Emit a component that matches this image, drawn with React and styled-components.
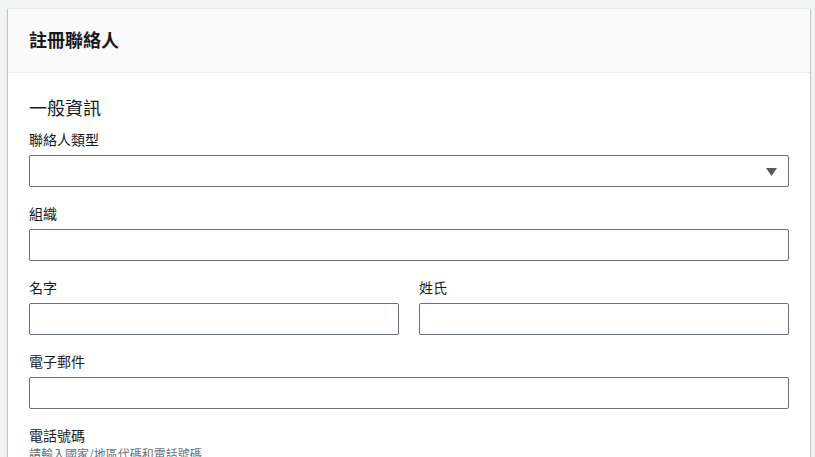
import React from "react";
import styled, { createGlobalStyle } from "styled-components";

const Global = createGlobalStyle`
  html, body { margin: 0; padding: 0; background: #f2f3f3; }
  body {
    padding: 8px;
    font-family: Roboto, "Noto Sans CJK TC", "Noto Sans", sans-serif;
    color: #16191f;
    overflow: hidden;
  }
`;

const Card = styled.div`
  width: 802px;
  box-sizing: border-box;
  background: #fff;
  border-top: 1px solid #eaeded;
  box-shadow: 0 1px 1px 0 rgba(0, 28, 36, 0.3), 1px 1px 1px 0 rgba(0, 28, 36, 0.15),
    -1px 1px 1px 0 rgba(0, 28, 36, 0.15);
`;

const Header = styled.div`
  height: 64px;
  box-sizing: border-box;
  background: #fafafa;
  border-bottom: 1px solid #eaeded;
  display: flex;
  align-items: center;
  padding: 0 21px 3px;
`;

const Title = styled.h2`
  margin: 0;
  font-size: 18px;
  font-weight: 700;
  line-height: 22px;
  font-family: "Noto Sans CJK TC", sans-serif;
  color: #16191f;
`;

const Body = styled.div`
  padding: 22px 21px 0 21px;
  display: flex;
  flex-direction: column;
  gap: 17px;
`;

const SectionTitle = styled.h3`
  margin: 0 0 -6px;
  font-size: 18px;
  font-weight: 400;
  line-height: 24px;
  font-family: "Noto Sans CJK TC", sans-serif;
`;

const Row = styled.div`
  display: grid;
  grid-template-columns: 1fr 1fr;
  gap: 20px;
`;

const Field = styled.div`
  display: flex;
  flex-direction: column;
`;

const Label = styled.label`
  font-size: 14px;
  line-height: 18px;
  margin-bottom: 7px;
  font-family: "Noto Sans CJK TC", sans-serif;
  color: #16191f;
`;

const Hint = styled.div`
  font-size: 12px;
  line-height: 16px;
  margin-top: -5px;
  margin-bottom: 4px;
  color: #687078;
  font-family: "Noto Sans CJK TC", sans-serif;
`;

const Input = styled.div`
  position: relative;
  height: 32px;
  box-sizing: border-box;
  border: 1px solid #687078;
  border-radius: 2px;
  background: #fff;
`;

const Caret = styled.svg`
  position: absolute;
  right: 11px;
  top: 12px;
`;

function TextField({ label }) {
  return (
    <Field>
      <Label>{label}</Label>
      <Input />
    </Field>
  );
}

export default function App() {
  return (
    <>
      <Global />
      <Card>
        <Header>
          <Title>註冊聯絡人</Title>
        </Header>
        <Body>
          <SectionTitle>一般資訊</SectionTitle>
          <Field>
            <Label>聯絡人類型</Label>
            <Input>
              <Caret width="11" height="8" viewBox="0 0 11 8">
                <path d="M0 0 H11 L5.5 8 Z" fill="#545b64" />
              </Caret>
            </Input>
          </Field>
          <TextField label="組織" />
          <Row>
            <TextField label="名字" />
            <TextField label="姓氏" />
          </Row>
          <TextField label="電子郵件" />
          <Field>
            <Label>電話號碼</Label>
            <Hint>請輸入國家/地區代碼和電話號碼</Hint>
            <Input />
          </Field>
        </Body>
      </Card>
    </>
  );
}
